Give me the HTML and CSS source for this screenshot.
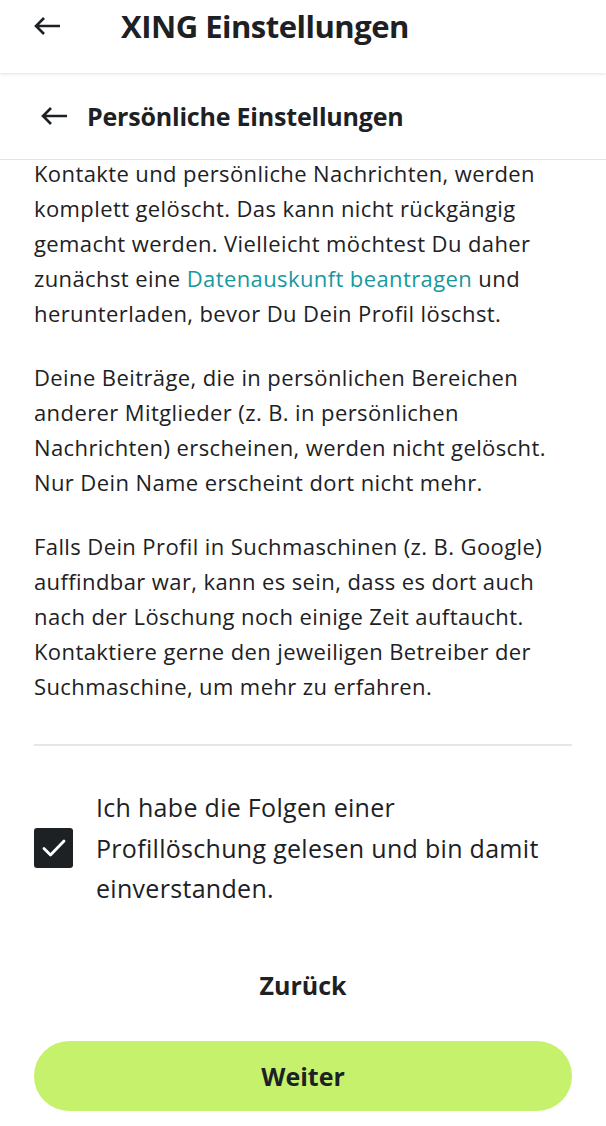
FILE: index.html
```html
<!DOCTYPE html>
<html lang="de">
  <head>
    <meta charset="UTF-8" />
    <meta name="viewport" content="width=device-width, initial-scale=1.0" />

    <link rel="stylesheet" href="styles.css">

    <title>XING Einstellungen</title>
  </head>
  <body>
    <header class="topbar">
      <svg class="arrow" width="28" height="20" viewBox="0 0 28 20">
        <path d="M27 10H3M11 2L3 10l8 8" fill="none" stroke="#1d2124" stroke-width="2.6" />
      </svg>
      <h1>XING Einstellungen</h1>
    </header>

    <div class="subbar">
      <svg class="arrow" width="28" height="20" viewBox="0 0 28 20">
        <path d="M27 10H3M11 2L3 10l8 8" fill="none" stroke="#1d2124" stroke-width="2.6" />
      </svg>
      <h2>Persönliche Einstellungen</h2>
    </div>

    <main class="content">
      <p class="first">
        Kontakte und persönliche Nachrichten, werden komplett gelöscht. Das
        kann nicht rückgängig gemacht werden. Vielleicht möchtest Du daher
        zunächst eine <a href="#">Datenauskunft beantragen</a> und
        herunterladen, bevor Du Dein Profil löschst.
      </p>
      <p>
        Deine Beiträge, die in persönlichen Bereichen anderer Mitglieder
        (z.&nbsp;B. in persönlichen Nachrichten) erscheinen, werden nicht
        gelöscht. Nur Dein Name erscheint dort nicht mehr.
      </p>
      <p>
        Falls Dein Profil in Suchmaschinen (z.&nbsp;B. Google) auffindbar war,
        kann es sein, dass es dort auch nach der Löschung noch einige Zeit
        auftaucht. Kontaktiere gerne den jeweiligen Betreiber der Suchmaschine,
        um mehr zu erfahren.
      </p>

      <hr class="divider" />

      <label class="consent">
        <span class="checkbox">
          <svg width="24" height="24" viewBox="0 0 24 24">
            <path d="M2 12.5l6.5 6.5 13.5-14" fill="none" stroke="#fff" stroke-width="2.8" stroke-linecap="round" stroke-linejoin="round" />
          </svg>
        </span>
        <span class="consent-text">Ich habe die Folgen einer Profillöschung gelesen und bin damit einverstanden.</span>
      </label>

      <div class="actions">
        <button class="back">Zurück</button>
        <button class="next">Weiter</button>
      </div>
    </main>
  </body>
</html>
```

FILE: styles.css
```css
body {
  margin: 0;
  background: #fff;
  color: #1d2124;
  font-family: "Open Sans", Roboto, sans-serif;
}

.topbar {
  display: flex;
  align-items: center;
  height: 52px;
  padding: 0 0 21px 33px;
  box-shadow: 0 1px 3px rgba(0, 0, 0, 0.12);
  position: relative;
}
.topbar h1 {
  margin: 0 0 0 60px;
  font-size: 31px;
  font-weight: bold;
  letter-spacing: -0.5px;
}

.subbar {
  display: flex;
  align-items: center;
  height: 86px;
  padding-left: 40px;
  border-bottom: 1px solid #e3e3e3;
}
.subbar h2 {
  margin: 0 0 0 19px;
  font-size: 25px;
  font-weight: bold;
  letter-spacing: -0.2px;
}

.arrow {
  display: block;
  flex-shrink: 0;
}

.content {
  padding: 0 34px;
}

.content p {
  margin: 29px 0 0;
  font-size: 22px;
  line-height: 35px;
  letter-spacing: 0.4px;
}
.content p.first {
  margin-top: -4px;
}
.content a {
  color: #16989e;
  text-decoration: none;
}

.divider {
  margin: 40px 0 0;
  border: none;
  height: 2px;
  background: #e6e6e6;
}

.consent {
  display: flex;
  align-items: center;
  gap: 23px;
  margin-top: 41px;
}
.checkbox {
  display: flex;
  align-items: center;
  justify-content: center;
  flex-shrink: 0;
  width: 39px;
  height: 40px;
  border-radius: 3px;
  background: #1d2124;
}
.consent-text {
  padding-right: 12px;
  font-size: 25px;
  line-height: 40.5px;
  letter-spacing: 0.3px;
}

.actions {
  display: flex;
  flex-direction: column;
  gap: 36px;
  margin-top: 56px;
}
.actions button {
  font-family: inherit;
  font-weight: bold;
  font-size: 25px;
  color: #1d2124;
  border: none;
  cursor: pointer;
}
.back {
  height: 40px;
  background: none;
}
.next {
  height: 70px;
  border-radius: 35px;
  background: #c6f16d;
}
```
